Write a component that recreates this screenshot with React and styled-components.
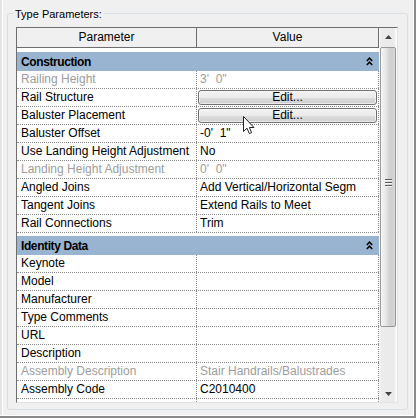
import React from "react";
import styled, { createGlobalStyle } from "styled-components";

const GlobalStyle = createGlobalStyle`
  html, body { margin: 0; padding: 0; background: #f0f0f0; }
  body { font-family: "Liberation Sans", Arial, sans-serif; font-size: 12px; color: #000; }
  * { box-sizing: border-box; }
`;

const Frame = styled.div`
  position: relative;
  width: 416px;
  height: 418px;
  background: #f0f0f0;
  padding: 13px 0 0 7px;
  border-right: 2px solid #8a8a8a;
  border-bottom: 2px solid #8a8a8a;
  box-shadow: inset -1px -1px 0 #ffffff, inset 2px 0 0 #e4e4e4, inset 3px 0 0 #ffffff;
  overflow: hidden;
`;

const GroupBox = styled.div`
  position: relative;
  width: 401px;
  height: 397px;
  border: 1px solid #d5dfe5;
  border-radius: 3px;
  padding: 13px 0 0 8px;
`;

const Legend = styled.span`
  position: absolute;
  top: -7px;
  left: 5px;
  padding: 0 2px;
  background: #f0f0f0;
  font-size: 11px;
  line-height: 14px;
`;

const ListPanel = styled.div`
  display: flex;
  width: 382px;
  height: 376px;
  border: 1px solid;
  border-color: #6e6e6e #e3e3e3 #e3e3e3 #6e6e6e;
  background: #fff;
`;

const Grid = styled.div`
  width: 362px;
  display: flex;
  flex-direction: column;
  overflow: hidden;
`;

const HeaderRow = styled.div`
  display: flex;
  flex: none;
  height: 20px;
  background: #f0f0f0;
  border-bottom: 1px solid #6e6e6e;
`;

const HeadCell = styled.div`
  width: ${(p) => p.$w}px;
  border-right: 1px solid #6e6e6e;
  text-align: center;
  line-height: 19px;
`;

const GroupRow = styled.div`
  flex: none;
  padding-top: ${(p) => p.$gap}px;
  background: #fff;
`;

const Band = styled.div`
  height: 19px;
  background: #99b4d1;
  display: flex;
  align-items: center;
  justify-content: space-between;
  padding: 0 6px 0 4px;
  font-weight: bold;
`;

const BandTitle = styled.span`
  letter-spacing: -0.4px;
`;

const Row = styled.div`
  display: flex;
  flex: none;
  height: 18px;
  border-bottom: 1px dotted #8c8c8c;
`;

const Cell = styled.div`
  width: ${(p) => p.$w}px;
  border-right: 1px dotted #8c8c8c;
  padding-left: ${(p) => p.$pad}px;
  line-height: 17px;
  white-space: pre;
  overflow: hidden;
  color: ${(p) => (p.$muted ? "#9d9d9d" : "#000")};
`;

const ButtonCell = styled.div`
  width: ${(p) => p.$w}px;
  border-right: 1px dotted #8c8c8c;
  padding: 1px 1px 0 1px;
`;

const EditButton = styled.div`
  height: 15px;
  border: 1px solid #707070;
  border-radius: 3px;
  background: linear-gradient(#f2f2f2 0%, #ebebeb 50%, #dddddd 51%, #cfcfcf 100%);
  box-shadow: inset 0 0 0 1px rgba(255, 255, 255, 0.6);
  text-align: center;
  line-height: 13px;
`;

const ScrollBar = styled.div`
  width: 18px;
  display: flex;
  flex-direction: column;
  padding: 0 1px;
  background: linear-gradient(to right, #fafafa 0, #ececec 2px, #eaeaea 15px, #fbfbfb 17px);
`;

const ArrowButton = styled.div`
  height: 17px;
  flex: none;
  display: flex;
  align-items: center;
  justify-content: center;
`;

const Track = styled.div`
  flex: 1;
  padding-top: 2px;
`;

const Thumb = styled.div`
  height: 280px;
  border: 1px solid #979797;
  border-radius: 2px;
  background: linear-gradient(to right, #f3f3f3 0%, #e8e8e8 35%, #d4d4d4 55%, #cfcfcf 80%, #dadada 100%);
  box-shadow: inset 1px 0 0 #fbfbfb;
  display: flex;
  align-items: center;
  justify-content: center;
`;

const Grip = styled.div`
  display: flex;
  flex-direction: column;
  gap: 1px;
  margin-top: -8px;
`;

const GripLine = styled.div`
  width: 7px;
  height: 1px;
  background: #5a5a5a;
  box-shadow: 0 1px 0 #f4f4f4;
  margin-bottom: 1px;
`;

const Cursor = styled.svg`
  position: absolute;
  left: 243px;
  top: 116px;
  pointer-events: none;
`;

const COL1 = 180;
const COL2 = 182;

const groups = [
  {
    title: "Construction",
    gap: 4,
    rows: [
      { name: "Railing Height", value: "3'  0\"", muted: true },
      { name: "Rail Structure", edit: true },
      { name: "Baluster Placement", edit: true },
      { name: "Baluster Offset", value: "-0'  1\"" },
      { name: "Use Landing Height Adjustment", value: "No" },
      { name: "Landing Height Adjustment", value: "0'  0\"", muted: true },
      { name: "Angled Joins", value: "Add Vertical/Horizontal Segm" },
      { name: "Tangent Joins", value: "Extend Rails to Meet" },
      { name: "Rail Connections", value: "Trim" },
    ],
  },
  {
    title: "Identity Data",
    gap: 3,
    rows: [
      { name: "Keynote", value: "" },
      { name: "Model", value: "" },
      { name: "Manufacturer", value: "" },
      { name: "Type Comments", value: "" },
      { name: "URL", value: "" },
      { name: "Description", value: "" },
      { name: "Assembly Description", value: "Stair Handrails/Balustrades", muted: true },
      { name: "Assembly Code", value: "C2010400" },
      { name: "", value: "", key: "next" },
    ],
  },
];

function Collapse() {
  return (
    <svg width="7" height="9" viewBox="0 0 7 9">
      <path d="M0.8 4 L3.5 1.2 L6.2 4 M0.8 8 L3.5 5.2 L6.2 8" fill="none" stroke="#000" strokeWidth="1.5" />
    </svg>
  );
}

function Arrow({ down }) {
  return (
    <svg width="7" height="4" viewBox="0 0 7 4">
      <path d={down ? "M0 0 L7 0 L3.5 4 Z" : "M0 4 L7 4 L3.5 0 Z"} fill="#444" />
    </svg>
  );
}

export default function App() {
  return (
    <>
      <GlobalStyle />
      <Frame>
        <GroupBox>
          <Legend>Type Parameters:</Legend>
          <ListPanel>
            <Grid>
              <HeaderRow>
                <HeadCell $w={COL1}>Parameter</HeadCell>
                <HeadCell $w={COL2}>Value</HeadCell>
              </HeaderRow>
              {groups.map((g) => (
                <React.Fragment key={g.title}>
                  <GroupRow $gap={g.gap}>
                    <Band>
                      <BandTitle>{g.title}</BandTitle>
                      <Collapse />
                    </Band>
                  </GroupRow>
                  {g.rows.map((r) => (
                    <Row key={r.key || r.name}>
                      <Cell $w={COL1} $pad={4} $muted={r.muted}>
                        {r.name}
                      </Cell>
                      {r.edit ? (
                        <ButtonCell $w={COL2}>
                          <EditButton>Edit...</EditButton>
                        </ButtonCell>
                      ) : (
                        <Cell $w={COL2} $pad={3} $muted={r.muted}>
                          {r.value}
                        </Cell>
                      )}
                    </Row>
                  ))}
                </React.Fragment>
              ))}
            </Grid>
            <ScrollBar>
              <ArrowButton>
                <Arrow />
              </ArrowButton>
              <Track>
                <Thumb>
                  <Grip>
                    <GripLine />
                    <GripLine />
                    <GripLine />
                  </Grip>
                </Thumb>
              </Track>
              <ArrowButton>
                <Arrow down />
              </ArrowButton>
            </ScrollBar>
          </ListPanel>
        </GroupBox>
        <Cursor width="13" height="20" viewBox="0 0 13 20">
          <path
            d="M0.5 0.5 L0.5 15.5 L4 12.2 L6.3 17.6 L8.6 16.6 L6.4 11.5 L11 11.5 Z"
            fill="#fff"
            stroke="#222"
            strokeWidth="1"
            strokeLinejoin="miter"
          />
        </Cursor>
      </Frame>
    </>
  );
}
